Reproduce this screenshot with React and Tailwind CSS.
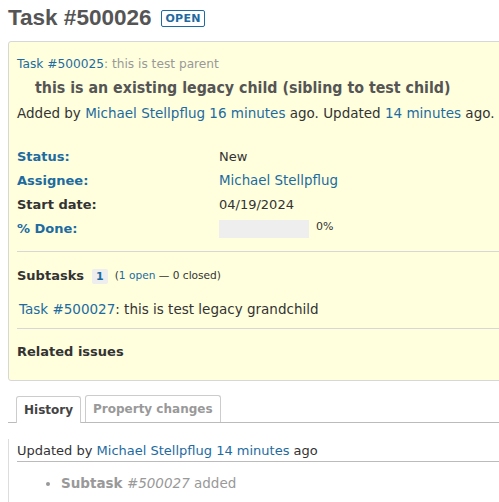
export default function App() {
    const font = { fontFamily: '"DejaVu Sans", Verdana, sans-serif' };

    return (
        <div className="h-[502px] w-[499px] overflow-hidden bg-white text-[13px] text-[#333]" style={font}>
            <div className="w-[540px] px-2">
                <div className="flex items-center gap-[10px] pt-[4px]">
                    <h2 className="font-['Liberation_Sans',Arial,sans-serif] text-[22.5px] font-bold leading-[28px] text-[#555]">Task #500026</h2>
                    <span className="rounded-[2px] border border-[#1d6ba0] px-[3px] text-[11px] font-bold leading-[15px] tracking-wide text-[#1d6ba0]">OPEN</span>
                </div>

                <div className="mt-[9px] rounded-[3px] border border-[#d7d7d7] bg-[#ffffdd] pb-[19px] pl-[8px] pt-[14px]">
                    <p className="text-[12.2px] leading-[16px] text-[#999]">
                        <span className="text-[#1d6ba0]">Task #500025</span>: this is test parent
                    </p>
                    <h3 className="mt-[6px] pl-[18px] font-['DejaVu_Sans_Condensed','DejaVu_Sans',sans-serif] text-[15.8px] font-bold leading-[20px] text-[#555]">this is an existing legacy child (sibling to test child)</h3>
                    <p className="mt-[6px] text-[13.5px] leading-[18px]">
                        Added by <span className="text-[#1d6ba0]">Michael Stellpflug</span> <span className="text-[#1d6ba0]">16 minutes</span> ago. Updated <span className="text-[#1d6ba0]">14 minutes</span> ago.
                    </p>

                    <div className="mt-[26px] grid grid-cols-[202px_1fr] gap-y-[6px] leading-[18px]">
                        <div className="font-bold text-[#1d6ba0]">Status:</div>
                        <div>New</div>
                        <div className="font-bold text-[#1d6ba0]">Assignee:</div>
                        <div className="text-[13.4px] text-[#1d6ba0]">Michael Stellpflug</div>
                        <div className="font-bold">Start date:</div>
                        <div>04/19/2024</div>
                        <div className="font-bold text-[#1d6ba0]">% Done:</div>
                        <div className="flex items-center gap-[7px]">
                            <div className="h-[18px] w-[90px] bg-[#eeeeee]"></div>
                            <span className="-mt-[4px] text-[11px]">0%</span>
                        </div>
                    </div>

                    <hr className="mb-[15px] mt-[13px] border-[#d7d7d7]" />

                    <div className="flex items-center gap-[8px]">
                        <span className="font-bold leading-[18px]">Subtasks</span>
                        <span className="rounded-[2px] bg-[#eeeeee] px-[4px] text-[11px] font-bold leading-[15px] text-[#1d6ba0]">1</span>
                        <span className="-ml-[1px] text-[10.6px] text-[#333]">(<span className="text-[#1d6ba0]">1 open</span> — 0 closed)</span>
                    </div>
                    <p className="mt-[15px] pl-[2px] text-[13.5px] leading-[18px]">
                        <span className="text-[#1d6ba0]">Task #500027</span>: this is test legacy grandchild
                    </p>
                    <hr className="mb-[14px] mt-[10px] border-[#d7d7d7]" />
                    <div className="font-bold leading-[18px]">Related issues</div>
                </div>

                <div className="mt-[14px] flex items-end gap-[4px] border-b border-[#bbbbbb] pl-[8px]">
                    <div className="-mb-px rounded-t-[3px] border border-b-0 border-[#cccccc] bg-white px-[7px] pb-[4px] pt-[5px] text-[12px] font-bold leading-[17px] text-[#444]">History</div>
                    <div className="rounded-t-[3px] border border-b-0 border-[#cccccc] bg-white px-[7px] pb-[4px] pt-[5px] text-[12px] font-bold leading-[17px] text-[#999]">Property changes</div>
                </div>

                <div className="mt-[16px] border-l border-[#dddddd] pl-[8px]">
                    <div className="border-b border-[#bbbbbb] pt-[2px] leading-[20px]">
                        Updated by <span className="text-[#1d6ba0]">Michael Stellpflug</span> <span className="text-[#1d6ba0]">14 minutes</span> ago
                    </div>
                    <ul className="ml-[44px] mt-[12px] list-disc pb-4 text-[13.5px] text-[#999] marker:text-[#999]">
                        <li className="leading-[18px]"><span className="font-bold">Subtask</span> <i>#500027</i> added</li>
                    </ul>
                </div>
            </div>
        </div>
    );
}
